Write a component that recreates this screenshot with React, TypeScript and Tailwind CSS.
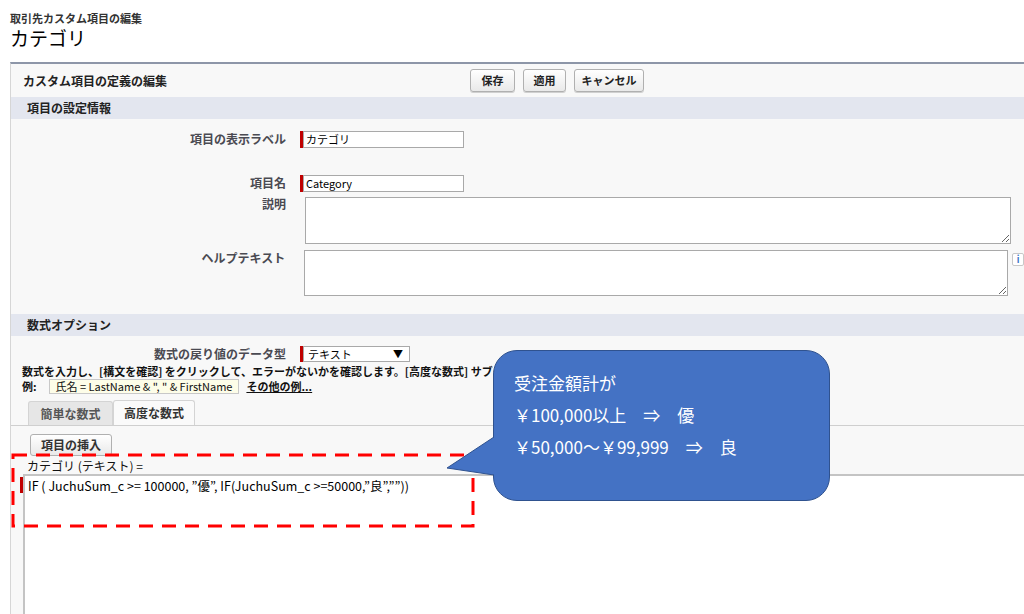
import React from 'react';

const font = { fontFamily: '"Noto Sans CJK JP", "Liberation Sans", sans-serif' };

const Btn: React.FC<{ label: string; w: string }> = ({ label, w }) => (
  <button
    className={`h-[23px] ${w} rounded-[3px] border border-[#b0b0b0] bg-gradient-to-b from-white to-[#e9e9e9] text-[11px] font-bold leading-none text-[#222] shadow-[0_1px_0_#d0d0d0]`}
  >
    {label}
  </button>
);

const SectionBand: React.FC<{ title: string; mt: string }> = ({ title, mt }) => (
  <div className={`${mt} flex h-[22px] items-center bg-[#e3e6ef] pl-[16px] text-[12px] font-bold text-[#222]`}>
    {title}
  </div>
);

const RequiredInput: React.FC<{ value: string; w: string }> = ({ value, w }) => (
  <div className="flex h-[17px]">
    <div className="w-[3px] bg-[#c00000]" />
    <div className={`${w} flex items-center border border-[#a9a9a9] bg-white pl-[2px] text-[11px] leading-none text-black`}>
      {value}
    </div>
  </div>
);

export default function App() {
  return (
    <div className="relative h-[614px] w-[1024px] overflow-hidden bg-white" style={font}>
      {/* page header */}
      <div className="pl-[10px] pt-[11px]">
        <div className="text-[11px] font-bold leading-[14px] text-[#333]">取引先カスタム項目の編集</div>
        <div className="mt-[2px] text-[19px] leading-[21px] text-black">カテゴリ</div>
      </div>

      {/* edit panel */}
      <div className="ml-[10px] mt-[14px] border-l border-t-[2px] border-l-[#d6d6d6] border-t-[#8d96a8] bg-[#f8f8f8] pb-[200px]">
        {/* toolbar */}
        <div className="flex h-[33px] items-center">
          <div className="w-[459px] pl-[12px] text-[12px] font-bold text-[#222]">カスタム項目の定義の編集</div>
          <div className="flex gap-[8px]">
            <Btn label="保存" w="w-[45px]" />
            <Btn label="適用" w="w-[43px]" />
            <Btn label="キャンセル" w="w-[70px]" />
          </div>
        </div>

        <SectionBand title="項目の設定情報" mt="mt-0" />

        {/* field rows */}
        <div className="mt-[11px] flex items-center">
          <div className="w-[275px] text-right text-[12px] font-bold text-[#4a4a52]">項目の表示ラベル</div>
          <div className="ml-[14px]">
            <RequiredInput value="カテゴリ" w="w-[161px]" />
          </div>
        </div>
        <div className="mt-[26px] flex items-center">
          <div className="w-[275px] text-right text-[12px] font-bold text-[#4a4a52]">項目名</div>
          <div className="ml-[14px]">
            <RequiredInput value="Category" w="w-[161px]" />
          </div>
        </div>
        <div className="mt-[5px] flex items-start">
          <div className="w-[275px] text-right text-[12px] font-bold leading-[14px] text-[#4a4a52]">説明</div>
          <textarea
            readOnly
            className="ml-[19px] h-[47px] w-[706px] border border-[#a9a9a9] bg-white"
          />
        </div>
        <div className="mt-[6px] flex items-start">
          <div className="w-[275px] pt-[1px] text-right text-[12px] font-bold leading-[14px] text-[#4a4a52]">ヘルプテキスト</div>
          <textarea
            readOnly
            className="ml-[19px] h-[46px] w-[706px] border border-[#a9a9a9] bg-white"
          />
          <div className="ml-[4px] mt-[3px] flex h-[13px] w-[12px] items-center justify-center rounded-[2px] border border-[#c8c8c8] bg-white text-[9px] font-bold leading-none text-[#3a74c8]">
            i
          </div>
        </div>

        <SectionBand title="数式オプション" mt="mt-[18px]" />

        <div className="mt-[9px] flex items-center">
          <div className="w-[275px] text-right text-[12px] font-bold text-[#4a4a52]">数式の戻り値のデータ型</div>
          <div className="ml-[14px] flex h-[16px]">
            <div className="w-[3px] bg-[#c00000]" />
            <div className="flex w-[107px] items-center justify-between border border-[#a9a9a9] bg-white pl-[4px] pr-[6px] text-[11px] leading-none text-black">
              <span>テキスト</span>
              <span className="text-[10px]">▼</span>
            </div>
          </div>
        </div>

        <div className="mt-[2px] w-[640px] overflow-hidden whitespace-nowrap pl-[11px] text-[11px] font-bold leading-[13px] text-[#111]">
          数式を入力し、[構文を確認] をクリックして、エラーがないかを確認します。[高度な数式] サブタブでは関数を使用できます。
        </div>
        <div className="mt-[1px] flex items-center pl-[11px] text-[11px] leading-[13px] text-[#111]">
          <span className="font-bold">例:</span>
          <span className="ml-[12px] border border-[#c8c8c8] bg-[#fdfde8] px-[6px] leading-[13px]">氏名 = LastName &amp; ", " &amp; FirstName</span>
          <span className="ml-[7px] font-bold underline">その他の例...</span>
        </div>

        {/* tabs */}
        <div className="mt-[7px] flex h-[25px] items-end border-b border-[#cfcfcf] pl-[17px]">
          <div className="flex h-[24px] w-[85px] items-center justify-center rounded-t-[3px] border border-b-0 border-[#d4d4d4] bg-[#e6e6e6] text-[12px] font-bold text-[#555]">
            簡単な数式
          </div>
          <div className="flex h-[25px] w-[82px] items-center justify-center rounded-t-[3px] border border-b-0 border-[#d4d4d4] bg-[#fafafa] text-[12px] font-bold text-[#333]">
            高度な数式
          </div>
        </div>

        <div className="mt-[5px] pl-[19px]">
          <button className="h-[22px] w-[82px] rounded-[3px] border border-[#b0b0b0] bg-gradient-to-b from-white to-[#e9e9e9] text-[12px] font-bold leading-none text-[#333]">
            項目の挿入
          </button>
        </div>

        <div className="mt-[3px] pl-[16px] text-[12px] leading-[13px] text-[#111]">カテゴリ (テキスト) =</div>

        {/* formula editor */}
        <div className="relative ml-[12px] mt-[2px] h-[200px] border-l-[2px] border-t-[2px] border-[#c4c4c4] bg-white pl-[3px] pt-[2px] text-[12.5px] leading-[15px] text-black">
          IF ( JuchuSum_c &gt;= 100000, ”優”, IF(JuchuSum_c &gt;=50000,”良”,””))
          <div className="absolute left-[-5px] top-[1px] h-[16px] w-[3px] bg-[#c00000]" />
        </div>
      </div>

      {/* highlight frame */}
      <svg className="absolute left-0 top-0" width="1024" height="614">
        <rect x="13" y="455" width="460" height="71" fill="none" stroke="#ff0000" strokeWidth="3" strokeDasharray="14 9" />
      </svg>

      {/* callout */}
      <div className="absolute left-[493px] top-[350px] h-[151px] w-[337px] rounded-[24px] border border-[#2f528f] bg-[#4472c4] pl-[20px] pt-[16px] text-[17px] leading-[32px] text-white">
        <div>受注金額計が</div>
        <div>￥100,000以上　⇒　優</div>
        <div>￥50,000～￥99,999　⇒　良</div>
      </div>
      <svg className="absolute left-0 top-0" width="1024" height="614">
        <polygon points="447,468 494,437 500,437 500,475 494,475" fill="#4472c4" />
        <polyline points="494,437 447,468 494,475" fill="none" stroke="#2f528f" strokeWidth="1" />
      </svg>
    </div>
  );
}
